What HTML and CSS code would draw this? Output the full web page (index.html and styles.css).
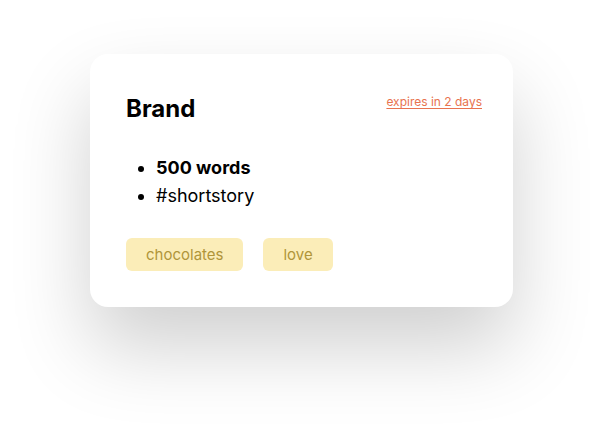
FILE: index.html
```html
<!DOCTYPE html>
<html lang="en">
<head>
  <meta charset="UTF-8">
  <meta name="viewport" content="width=device-width, initial-scale=1.0">
  <title>Prompt Card</title>
  <link rel="stylesheet" href="styles.css">
</head>
<body>
  <main class="page">
    <div class="card">
      <div class="card-header">
        <h2 class="brand">Brand</h2>
        <a href="#" class="expires">expires in 2 days</a>
      </div>
      <ul class="details">
        <li class="words">500 words</li>
        <li>#shortstory</li>
      </ul>
      <div class="tags">
        <span class="tag">chocolates</span>
        <span class="tag">love</span>
      </div>
    </div>
  </main>
</body>
</html>
```
FILE: styles.css
```css
html, body {
  min-height: 100vh;
}
body {
  margin: 0;
  padding: 0;
  background-color: #fff;
  font-family: Inter, "Noto Sans", sans-serif;
  color: #000;
}
.page {
  min-height: 100vh;
  box-sizing: border-box;
  padding: 54px 0 0 90px;
}
.card {
  width: 423px;
  height: 253px;
  box-sizing: border-box;
  padding: 36px 31px 0 36px;
  background: #fff;
  border-radius: 18px;
  box-shadow: 0 40px 80px rgba(0, 0, 0, 0.19);
}
.card-header {
  display: flex;
  justify-content: space-between;
  align-items: flex-start;
}
.brand {
  margin: 4px 0 0;
  font-size: 24px;
  font-weight: 700;
  line-height: 30px;
}
.expires {
  margin-top: 3px;
  font-size: 12px;
  line-height: 17px;
  color: #e8734f;
  text-decoration: underline;
  text-underline-offset: 2px;
}
.details {
  margin: 30px 0 0;
  padding-left: 30px;
  font-size: 18px;
  line-height: 28px;
}
.words {
  font-weight: 700;
}
.tags {
  display: flex;
  gap: 20px;
  margin-top: 28px;
}
.tag {
  padding: 0 20px;
  height: 33px;
  line-height: 33px;
  font-size: 15px;
  color: #b0953a;
  background-color: #fbedb8;
  border-radius: 6px;
}
```
